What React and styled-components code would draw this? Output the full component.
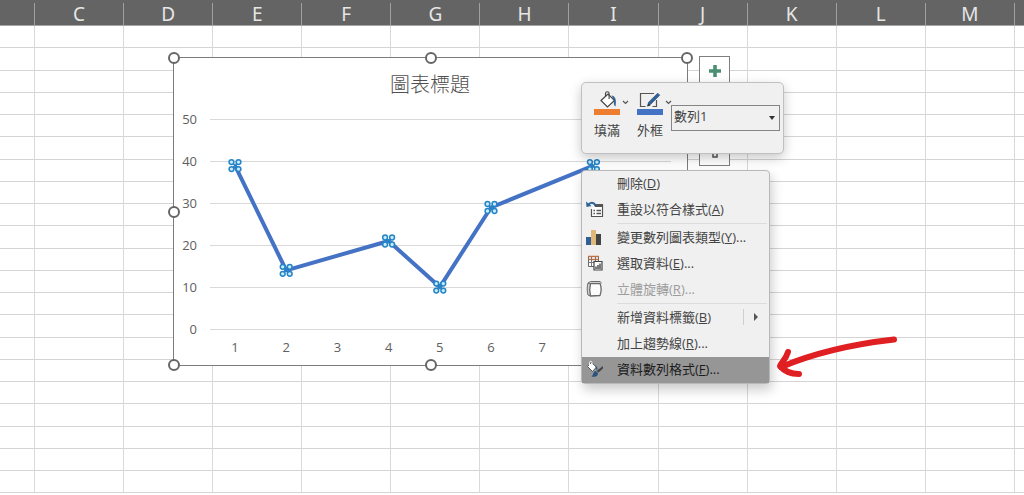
import React, { useState } from "react";
import styled, { createGlobalStyle } from "styled-components";

const GlobalStyle = createGlobalStyle`
  * {
    box-sizing: border-box;
  }

  body {
    margin: 0;
    background: #fff;
    font-family: "Open Sans", "Noto Sans CJK TC", sans-serif;
    color: #444;
  }

  button,
  select {
    font: inherit;
    color: inherit;
  }
`;

const Sheet = styled.main`
  position: relative;
  min-height: 100vh;
  overflow: hidden;
`;

const Grid = styled.table`
  width: 100%;
  table-layout: fixed;
  border-collapse: separate;
  border-spacing: 0;
`;

const Column = styled.col`
  width: ${(props) => props.$width || "auto"};
`;

const ColumnHead = styled.th`
  height: 26px;
  padding: 3px 0 0;
  background: #646464;
  border-bottom: 1px solid #a6a6a6;
  color: #e6e6e6;
  font-family: "Noto Sans", sans-serif;
  font-size: 19px;
  font-weight: 400;
  line-height: 22px;

  &:last-child span {
    border-right: none;
  }
`;

const HeadLabel = styled.span`
  display: block;
  height: 22px;
  border-right: 1px solid #a0a0a0;
`;

const Row = styled.tr`
  height: 22px;

  &:nth-child(4n + 2) {
    height: 23px;
  }
`;

const Cell = styled.td`
  padding: 0;
  border-right: 1px solid #d9d9d9;
  border-bottom: 1px solid #d4d4d4;

  &:last-child {
    border-right: none;
  }
`;

const ChartBox = styled.figure`
  position: absolute;
  left: 173px;
  top: 57px;
  width: 515px;
  margin: 0;
  padding: 12px 1px 1px 0;
  background: #fff;
  border: 1px solid #7c7c7c;
`;

const ChartTitle = styled.figcaption`
  font-size: 20px;
  font-weight: 300;
  line-height: 30px;
  text-align: center;
  color: #505050;
`;

const Plot = styled.svg`
  display: block;
  width: 100%;
  height: auto;
`;

const AxisText = styled.text`
  font-size: 13px;
  fill: #606060;
`;

const Handle = styled.span`
  position: absolute;
  left: ${(props) => props.$x};
  top: ${(props) => props.$y};
  width: 12px;
  height: 12px;
  margin: -6px;
  background: #fff;
  border: 2px solid #666;
  border-radius: 50%;
`;

const SideButtons = styled.div`
  position: absolute;
  left: 699px;
  top: 56px;
  display: flex;
  flex-direction: column;
  gap: 10px;
`;

const SideButton = styled.button`
  display: flex;
  align-items: center;
  justify-content: center;
  width: 31px;
  height: 30px;
  padding: 0;
  background: #fff;
  border: 1px solid #7f7f7f;
`;

const Toolbar = styled.div`
  position: absolute;
  left: 581px;
  top: 82px;
  display: flex;
  align-items: flex-start;
  width: 203px;
  height: 72px;
  padding: 7px 3px 0 8px;
  background: #f0f0f0;
  border: 1px solid #c0c0c0;
  border-radius: 5px;
  box-shadow: 0 4px 12px rgba(0, 0, 0, 0.22);
`;

const ToolButton = styled.button`
  display: flex;
  flex-direction: column;
  width: 43px;
  padding: 0 0 0 4px;
  background: none;
  border: none;
  font-size: 13px;
  line-height: 20px;
  text-align: left;
`;

const ToolIcon = styled.span`
  display: flex;
  align-items: center;
  width: 36px;
  height: 19px;
`;

const Swatch = styled.span`
  width: 26px;
  height: 6px;
  margin-bottom: 5px;
  background: ${(props) => props.$color};
`;

const SeriesField = styled.label`
  position: relative;
  flex: 1;
  margin: 15px 0 0 -5px;
`;

const SeriesSelect = styled.select`
  display: block;
  width: 100%;
  height: 26px;
  padding: 0 0 4px 2px;
  appearance: none;
  background: #f0f0f0;
  border: 1px solid #858585;
  border-radius: 0;
  font-size: 13px;
`;

const Caret = styled.svg`
  position: absolute;
  right: 5px;
  top: 11px;
  pointer-events: none;
`;

const Chevron = styled.svg`
  flex: none;
  margin-top: 5px;
`;

const Menu = styled.div`
  position: absolute;
  left: 581px;
  top: 170px;
  width: 189px;
  display: flex;
  flex-direction: column;
  background: #f0f0f0;
  border: 1px solid #b8b8b8;
  border-radius: 4px;
  box-shadow: 2px 6px 12px rgba(0, 0, 0, 0.2);
`;

const MenuItem = styled.button`
  display: flex;
  align-items: center;
  height: 26px;
  padding: 0 11px 3px 4px;
  background: ${(props) => (props.$active ? "#969696" : "transparent")};
  border: none;
  font-size: 13px;
  color: ${(props) => (props.$active ? "#1c1c1c" : "#444")};
  white-space: nowrap;

  &:disabled {
    color: #9c9c9c;
  }
`;

const MenuIcon = styled.span`
  display: flex;
  width: 31px;
  flex: none;
`;

const Submenu = styled.span`
  display: flex;
  align-items: center;
  height: 16px;
  margin-left: auto;
  padding-left: 10px;
  border-left: 1px solid #cfcfcf;
`;

const Separator = styled.hr`
  height: 2px;
  margin: 0 2px 0 35px;
  border: none;
  border-top: 1px solid #dcdcdc;
`;

const Arrow = styled.svg`
  position: absolute;
  left: 770px;
  top: 330px;
  pointer-events: none;
`;

const columns = ["C", "D", "E", "F", "G", "H", "I", "J", "K", "L", "M"];
const rows = Array.from({ length: 21 }, (_, i) => i);

const scale = [50, 40, 30, 20, 10, 0];
const categories = [1, 2, 3, 4, 5, 6, 7];
const series = [
  { x: 1, value: 39 },
  { x: 2, value: 14 },
  { x: 4, value: 21 },
  { x: 5, value: 10 },
  { x: 6, value: 29 },
  { x: 8, value: 39 },
];

const toX = (category) => 61 + (category - 1) * 51.2;
const toY = (value) => 229 - value * 4.19;

const handles = [
  ["0%", "0%"],
  ["50%", "0%"],
  ["100%", "0%"],
  ["0%", "50%"],
  ["100%", "50%"],
  ["0%", "100%"],
  ["50%", "100%"],
  ["100%", "100%"],
];

function ChevronIcon() {
  return (
    <Chevron width="7" height="5" viewBox="0 0 7 5" fill="none" stroke="#555" strokeWidth="1.2">
      <path d="M1 1l2.5 2.5L6 1" />
    </Chevron>
  );
}

function BucketIcon() {
  return (
    <svg width="28" height="18" viewBox="0 0 28 18" fill="none">
      <path d="M7 9.5L14 3l6.5 6.5L13.5 16z" fill="#fff" stroke="#444" strokeWidth="1.2" />
      <path d="M11.5 6V2.5a1.8 1.8 0 0 1 3.6 0V8" stroke="#444" strokeWidth="1.1" />
      <path d="M17.5 4.5c3.5.3 5.2 3.5 4 11-1.8-1.2-2-3.5-1.2-6z" fill="#2f6299" />
    </svg>
  );
}

function OutlineIcon() {
  return (
    <svg width="28" height="18" viewBox="0 0 28 18" fill="none">
      <path d="M17 2.5H3.5v13h5M19.5 9v6.5h-4" stroke="#555" strokeWidth="1.2" />
      <path d="M10.5 15l1.2-3.8 9-9 2 2-9 9z" fill="#2f6299" stroke="#2f5580" strokeWidth="0.8" />
      <path d="M10.5 15.5l1-3 2 2z" fill="#333" />
    </svg>
  );
}

function ResetIcon() {
  return (
    <svg width="18" height="18" viewBox="0 0 18 18" fill="none">
      <path d="M9 4.5h7.500v12h-11V9" fill="#fff" stroke="#555" strokeWidth="1.2" />
      <path d="M9 6h7.500" stroke="#555" strokeWidth="2" />
      <path d="M7.500 10.500H9M7.500 13.500H9M10.500 10.500h4.500M10.500 13.500h4.500" stroke="#555" strokeWidth="1.3" />
      <path d="M9.500 6.500C9 2.500 5 1.500 2 5" stroke="#2f6299" strokeWidth="2" />
      <path d="M0 1.500l.500 5.500 5-1z" fill="#2f6299" />
    </svg>
  );
}

function ColumnsIcon() {
  return (
    <svg width="18" height="18" viewBox="0 0 18 18">
      <path d="M0 9h5v8H0z" fill="#2f5f94" />
      <path d="M5 2h5v15H5z" fill="#e0b878" />
      <path d="M10 6h5v11h-5z" fill="#444" />
    </svg>
  );
}

function SelectDataIcon() {
  return (
    <svg width="18" height="18" viewBox="0 0 18 18" fill="none">
      <path d="M2.500 2.500h10v10h-10z" fill="#fff" stroke="#666" />
      <path d="M2 2.500h11M2.500 5.500h10" stroke="#c07243" strokeWidth="1.4" />
      <path d="M2.500 8.500h10M5.500 3v9M9.500 3v9" stroke="#777" />
      <path d="M8 7.500h8v8.500H8z" fill="#fff" stroke="#444" strokeWidth="1.2" />
      <path d="M10 12.500V15M12 11v4M14 9.500V15" stroke="#444" strokeWidth="1.4" />
    </svg>
  );
}

function RotateIcon() {
  return (
    <svg width="18" height="18" viewBox="0 0 18 18" fill="none" stroke="#6a6a6a" strokeLinejoin="round">
      <path d="M4.500 3.500L2 3C.900 6.500.900 11.500 2 15l2.500 1" fill="#d2d2d2" />
      <path d="M2 3l2.500-1.500H14c1 .500 1 1 1 2" />
      <path d="M4.500 3.500C3.500 7.500 3.500 12 4.500 16l9.500-.500c1.500-4 1.500-8.500 0-12z" fill="#fcfcfc" strokeWidth="1.300" />
    </svg>
  );
}

function FormatIcon() {
  return (
    <svg width="18" height="18" viewBox="0 0 18 18" fill="none">
      <path d="M1.500 6.500L5.500 2.500l5 4.500-4 4.500z" fill="#fff" stroke="#555" />
      <path d="M3.500 5V2.500C3.500.8 6 .8 6 2.500V6" stroke="#f4f4f4" />
      <path d="M9 5.500c2.500 1 3 3 2 5.500z" fill="#2f5580" />
      <path d="M16.800 6L17 8.500l-4.500 4-1.800-1.500z" fill="#444" />
      <path d="M9.800 11l2.200 2.200c0 3-3 4-6.500 3.500C7.500 15 7 11.500 9.800 11z" fill="#2a5280" />
    </svg>
  );
}

const menuItems = [
  { id: "delete", label: "刪除", hotkey: "D" },
  { id: "reset", label: "重設以符合樣式", hotkey: "A", icon: <ResetIcon /> },
  { id: "type", label: "變更數列圖表類型", hotkey: "Y", more: true, icon: <ColumnsIcon />, divided: true },
  { id: "select", label: "選取資料", hotkey: "E", more: true, icon: <SelectDataIcon /> },
  { id: "rotate", label: "立體旋轉", hotkey: "R", more: true, icon: <RotateIcon />, disabled: true },
  { id: "labels", label: "新增資料標籤", hotkey: "B", submenu: true, divided: true },
  { id: "trend", label: "加上趨勢線", hotkey: "R", more: true },
  { id: "format", label: "資料數列格式", hotkey: "F", more: true, icon: <FormatIcon /> },
];

function LineChart() {
  return (
    <ChartBox>
      <ChartTitle>圖表標題</ChartTitle>
      <Plot viewBox="0 0 512 264">
        {scale.map((value) => (
          <g key={value}>
            <path d={`M36 ${Math.floor(toY(value)) + 0.5}H497`} stroke="#d9d9d9" />
            <AxisText x="23" y={Math.floor(toY(value)) + 5} textAnchor="end">
              {value}
            </AxisText>
          </g>
        ))}
        {categories.map((category) => (
          <AxisText key={category} x={toX(category)} y="252" textAnchor="middle">
            {category}
          </AxisText>
        ))}
        <polyline
          points={series.map((point) => `${toX(point.x)},${toY(point.value)}`).join(" ")}
          fill="none"
          stroke="#4472c4"
          strokeWidth="4"
          strokeLinejoin="round"
        />
        {series.map((point) => (
          <g
            key={point.x}
            transform={`translate(${toX(point.x)} ${toY(point.value)})`}
            fill="#c8ecf8"
            stroke="#2585c7"
            strokeWidth="1.5"
          >
            <path d="M-3.5 -3.5l7 7M3.5 -3.5l-7 7" />
            <circle cx="-3.5" cy="-3.5" r="2.4" />
            <circle cx="3.5" cy="-3.5" r="2.4" />
            <circle cx="-3.5" cy="3.5" r="2.4" />
            <circle cx="3.5" cy="3.5" r="2.4" />
          </g>
        ))}
      </Plot>
      {handles.map(([x, y]) => (
        <Handle key={x + y} $x={x} $y={y} />
      ))}
    </ChartBox>
  );
}

function App() {
  const [active, setActive] = useState("format");

  return (
    <Sheet>
      <GlobalStyle />

      <Grid>
        <colgroup>
          <Column $width="35px" />
          {columns.map((name) => (
            <Column key={name} />
          ))}
          <Column $width="9px" />
        </colgroup>
        <thead>
          <tr>
            <ColumnHead>
              <HeadLabel />
            </ColumnHead>
            {columns.map((name) => (
              <ColumnHead key={name} scope="col">
                <HeadLabel>{name}</HeadLabel>
              </ColumnHead>
            ))}
            <ColumnHead />
          </tr>
        </thead>
        <tbody>
          {rows.map((row) => (
            <Row key={row}>
              <Cell />
              {columns.map((name) => (
                <Cell key={name} />
              ))}
              <Cell />
            </Row>
          ))}
        </tbody>
      </Grid>

      <LineChart />

      <SideButtons>
        <SideButton aria-label="圖表項目">
          <svg width="12" height="12" viewBox="0 0 12 12">
            <path d="M4.200 0h3.600v4.200H12v3.600H7.800V12H4.200V7.800H0V4.200h4.200z" fill="#4b8f73" />
          </svg>
        </SideButton>
        <SideButton aria-label="圖表樣式" />
        <SideButton aria-label="圖表篩選">
          <svg width="14" height="14" viewBox="0 0 14 14">
            <path d="M1 1h12L9 7v6H5V7z" fill="#fff" stroke="#555" strokeWidth="1.5" />
          </svg>
        </SideButton>
      </SideButtons>

      {/* Mini toolbar */}
      <Toolbar>
        <ToolButton>
          <ToolIcon>
            <BucketIcon />
            <ChevronIcon />
          </ToolIcon>
          <Swatch $color="#ed7d31" />
          填滿
        </ToolButton>
        <ToolButton>
          <ToolIcon>
            <OutlineIcon />
            <ChevronIcon />
          </ToolIcon>
          <Swatch $color="#4472c4" />
          外框
        </ToolButton>
        <SeriesField>
          <SeriesSelect aria-label="圖表項目" defaultValue="數列1">
            <option>數列1</option>
          </SeriesSelect>
          <Caret width="6" height="4" viewBox="0 0 6 4">
            <path d="M0 0h6L3 4z" fill="#333" />
          </Caret>
        </SeriesField>
      </Toolbar>

      {/* Context menu */}
      <Menu role="menu">
        {menuItems.map((item) => (
          <React.Fragment key={item.id}>
            {item.divided && <Separator />}
            <MenuItem
              role="menuitem"
              disabled={item.disabled}
              $active={active === item.id}
              onMouseEnter={() => setActive(item.id)}
            >
              <MenuIcon>{item.icon}</MenuIcon>
              <span>
                {item.label}(<u>{item.hotkey}</u>){item.more && "..."}
              </span>
              {item.submenu && (
                <Submenu>
                  <svg width="4" height="8" viewBox="0 0 4 8">
                    <path d="M0 0l4 4-4 4z" fill="#555" />
                  </svg>
                </Submenu>
              )}
            </MenuItem>
          </React.Fragment>
        ))}
      </Menu>

      <Arrow width="134" height="56" viewBox="0 0 134 56" fill="none" stroke="#e01f22" strokeWidth="6" strokeLinecap="round" strokeLinejoin="round">
        <path d="M124 9.5C84 14 42 24 11 37" />
        <path d="M18 22C16 29 12 32 10 36c5 6 13 8 19 8" />
      </Arrow>
    </Sheet>
  );
}

export default App;
